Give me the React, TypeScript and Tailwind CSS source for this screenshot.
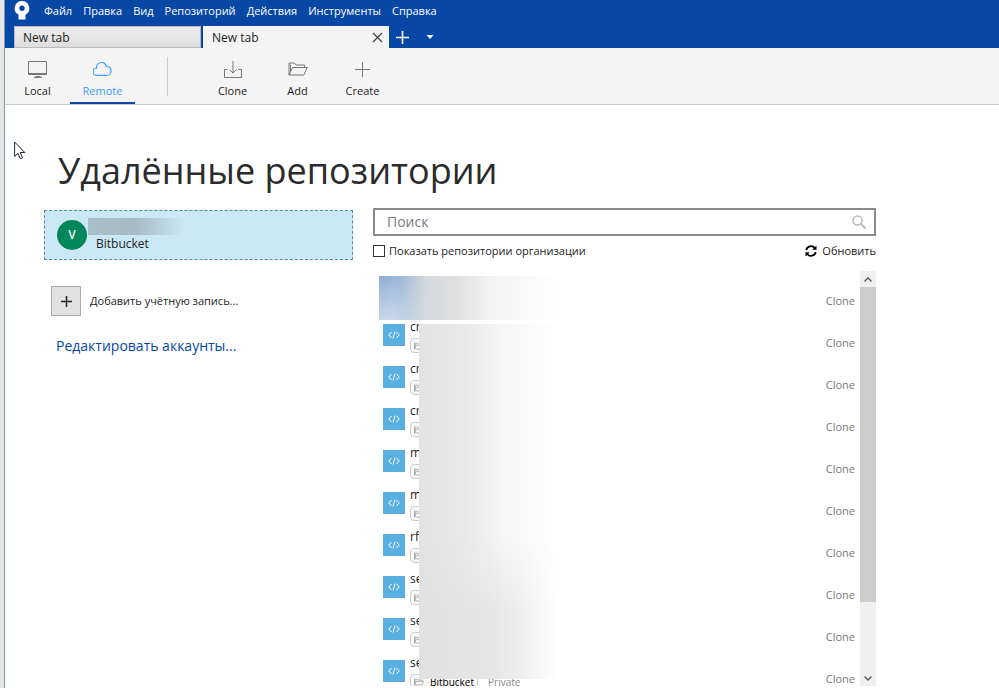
import { useState } from 'react'
import type { ReactNode } from 'react'

const menu = ['Файл', 'Правка', 'Вид', 'Репозиторий', 'Действия', 'Инструменты', 'Справка']

const repos = ['', 'cr', 'cr', 'cr', 'm', 'm', 'rf', 'se', 'se', 'se']

function Logo() {
  return (
    <svg width="16" height="20" viewBox="0 0 16 20" className="shrink-0" aria-hidden="true">
      <path
        d="M8 1a7.300 7.300 0 0 0-3.500 13.700v4.800h7v-4.800A7.300 7.300 0 0 0 8 1Zm0 4.600a2.700 2.700 0 1 1 0 5.400 2.700 2.700 0 0 1 0-5.400Z"
        fill="#fff"
        fillRule="evenodd"
      />
    </svg>
  )
}

function FolderIcon({ className }: { className?: string }) {
  return (
    <svg viewBox="0 0 20 14" fill="none" stroke="currentColor" className={className} aria-hidden="true">
      <path d="M1 13V1h5.500l1.500 2h8.500v2.500M1 13l3.500-7.500h14.800L15.800 13zM2.500 9.500v-7" />
    </svg>
  )
}

type ToolButtonProps = { label: string; active?: boolean; onClick?: () => void; children: ReactNode }

function ToolButton({ label, active, onClick, children }: ToolButtonProps) {
  return (
    <button
      type="button"
      onClick={onClick}
      className={`flex h-14 w-[65px] flex-col items-center border-b-2 pt-[10px] ${
        active ? 'border-[#0747a6] text-[#3b99fc]' : 'border-transparent text-[#777]'
      }`}
    >
      <span className="flex h-[22px] items-center justify-center">{children}</span>
      <span className={`mt-[2px] text-[11px] leading-[18px] ${active ? '' : 'text-[#222]'}`}>{label}</span>
    </button>
  )
}

function RepoRow({ name }: { name: string }) {
  return (
    <li className="flex h-[42px] items-start pl-[10px] pr-[5px]">
      <span className="mt-[2px] flex h-[22px] w-[22px] shrink-0 items-center justify-center bg-[#59afe1] text-white">
        <svg width="12" height="8" viewBox="0 0 12 8" fill="none" stroke="currentColor" aria-hidden="true">
          <path d="M3.500 1 .8 4l2.700 3M8.500 1l2.700 3-2.700 3M7 .5l-2 7" />
        </svg>
      </span>
      <div className="ml-[5px] min-w-0 flex-1">
        <div className="h-4 text-[12px] leading-[10px] text-[#222]">{name}</div>
        <div className="flex h-[15px] items-center">
          <span className="flex h-[15px] items-center gap-[6px] rounded-sm border border-[#ccc] bg-[#f8f8f8] px-[3px] text-[10px] leading-[12px] text-black">
            <FolderIcon className="h-2 w-[10px] text-[#777]" />
            Bitbucket
          </span>
          <span className="pl-[10px] text-[10px] leading-[12px] text-[#888]">Private</span>
        </div>
      </div>
      <button type="button" className="h-[42px] text-[11px] text-[#777]">
        Clone
      </button>
    </li>
  )
}

export default function App() {
  const [view, setView] = useState('Remote')
  const [query, setQuery] = useState('')
  const [showOrg, setShowOrg] = useState(false)

  return (
    <div className="flex h-screen overflow-hidden bg-[#e6e6e6] pl-1 font-['Open_Sans',sans-serif] text-[#222]">
      <div className="relative flex min-w-0 flex-1 flex-col border-l border-[#7d97ad] bg-white">
        <header className="bg-[#0747a6] text-white">
          <div className="flex h-[26px] items-start gap-[14px] pl-[9px]">
            <Logo />
            <nav className="flex gap-[11px] text-[11px] leading-[22px]">
              {menu.map((item) => (
                <button key={item} type="button">
                  {item}
                </button>
              ))}
            </nav>
          </div>
          <div className="flex h-[22px] items-stretch pl-[9px] text-[12px] text-[#222]">
            <button
              type="button"
              className="w-[187px] border border-[#bbb] bg-linear-to-b from-[#eee] to-[#ddd] pl-2 pt-px text-left"
            >
              New tab
            </button>
            <div className="ml-[2px] flex w-[186px] items-center justify-between bg-[#f4f4f4] pl-[9px] pr-[6px] pt-px">
              <button type="button">New tab</button>
              <button type="button" aria-label="Закрыть">
                <svg width="11" height="11" viewBox="0 0 11 11" stroke="#444" strokeWidth="1.300">
                  <path d="m1 1 9 9M10 1l-9 9" />
                </svg>
              </button>
            </div>
            <button type="button" aria-label="Новая вкладка" className="ml-[7px]">
              <svg width="13" height="13" viewBox="0 0 13 13" stroke="#fff" strokeWidth="1.600">
                <path d="M6.500 0v13M0 6.500h13" />
              </svg>
            </button>
            <button type="button" aria-label="Список вкладок" className="ml-[17px]">
              <svg width="8" height="4" viewBox="0 0 8 4" fill="#fff">
                <path d="M.5 0h7L4 4z" />
              </svg>
            </button>
          </div>
        </header>

        <div className="flex border-b border-[#ccc] bg-[#f4f4f4]">
          <ToolButton label="Local" active={view === 'Local'} onClick={() => setView('Local')}>
            <svg width="20" height="18" viewBox="0 0 20 18" fill="none" stroke="currentColor">
              <path d="M.5 1.500h18v13H.5zM.5 13.500h18M6 17.500h8M7.500 16.500h5" />
            </svg>
          </ToolButton>
          <ToolButton label="Remote" active={view === 'Remote'} onClick={() => setView('Remote')}>
            <svg width="20" height="16" viewBox="0 0 20 16" fill="none" stroke="currentColor" strokeWidth="1.200">
              <path d="M4 14.400a3.700 3.700 0 0 1-.5-7.400C3.500 3.500 5.600 1.500 8.500 1.500c2.500 0 4.300 1.500 4.900 4 2.800 0 4.600 1.900 4.600 4.400 0 2.600-1.900 4.500-4.400 4.500z" />
            </svg>
          </ToolButton>
          <div className="ml-8 mr-8 mt-[9px] h-[39px] w-px bg-[#ccc]" />
          <ToolButton label="Clone">
            <svg width="18" height="17" viewBox="0 0 18 17" fill="none" stroke="currentColor">
              <path d="M3.500 8.500h-3v8h17v-8h-3M9 0v12M5.500 8.500 9 12l3.500-3.500" />
            </svg>
          </ToolButton>
          <ToolButton label="Add">
            <FolderIcon className="h-[14px] w-5" />
          </ToolButton>
          <ToolButton label="Create">
            <svg width="15" height="15" viewBox="0 0 15 15" stroke="currentColor">
              <path d="M7.500 0v15M0 7.500h15" />
            </svg>
          </ToolButton>
        </div>

        <main className="flex min-h-0 flex-1 flex-col pl-[39px]">
          <h1 className="mt-[38px] pl-[14px] text-[36px] leading-[56px] text-[#2b2b2b]">Удалённые репозитории</h1>
          <div className="mt-[9px] flex min-h-0 flex-1">
            <aside className="mt-[2px] w-[309px] shrink-0">
              <button
                type="button"
                className="flex h-[50px] w-full items-center border border-dashed border-[#5b8aa0] bg-[#cbe8f6] pl-3 text-left"
              >
                <span className="flex h-[30px] w-[30px] items-center justify-center rounded-full bg-[#00875a] text-[12px] font-semibold text-white">
                  V
                </span>
                <span className="flex flex-col">
                  <span className="ml-px h-[17px] w-24 bg-linear-to-r from-[#a8bfca] via-[#a6bbc6] via-50% to-[#cbe8f6]" />
                  <span className="pl-[9px] text-[12px] leading-[18px]">Bitbucket</span>
                </span>
              </button>
              <button type="button" className="ml-[7px] mt-[26px] flex items-center gap-[9px] text-[11px]">
                <span className="flex h-[30px] w-[30px] items-center justify-center border border-[#aaa] bg-[#e1e1e1]">
                  <svg width="11" height="11" viewBox="0 0 11 11" stroke="#222" strokeWidth="1.500">
                    <path d="M5.500 0v11M0 5.500h11" />
                  </svg>
                </span>
                Добавить учётную запись...
              </button>
              <a href="#accounts" className="ml-3 mt-5 block text-[14px] leading-5 text-[#0747a6]">
                Редактировать аккаунты...
              </a>
            </aside>

            <section className="ml-5 flex w-[503px] min-w-0 flex-col">
              <label className="flex h-7 shrink-0 items-center border-2 border-[#8a8a8a] pl-3 pr-2">
                <input
                  value={query}
                  onChange={(e) => setQuery(e.target.value)}
                  placeholder="Поиск"
                  aria-label="Поиск"
                  className="min-w-0 flex-1 text-[14px] leading-5 outline-none placeholder:text-[#777]"
                />
                <svg width="14" height="14" viewBox="0 0 14 14" fill="none" stroke="#bbb">
                  <circle cx="5.500" cy="5.500" r="4.500" strokeWidth="1.500" />
                  <path d="m9 9 4 4" strokeWidth="2.200" strokeLinecap="round" />
                </svg>
              </label>
              <div className="mt-[6px] flex h-[18px] shrink-0 items-center justify-between text-[11px]">
                <label className="flex items-center gap-1">
                  <input
                    type="checkbox"
                    checked={showOrg}
                    onChange={(e) => setShowOrg(e.target.checked)}
                    className="h-3 w-3 appearance-none border border-[#333] bg-white checked:bg-[#0747a6]"
                  />
                  Показать репозитории организации
                </label>
                <button type="button" className="flex items-center gap-[5px]">
                  <svg width="12" height="12" viewBox="0 0 12 12" fill="none" stroke="#000" strokeWidth="1.800">
                    <path d="M1.200 5a4.900 4.900 0 0 1 8.600-2M10.800 7a4.900 4.900 0 0 1-8.600 2" />
                    <path d="M11.500.5v4.300H7.200zM.5 11.500V7.200h4.300z" fill="#000" stroke="none" />
                  </svg>
                  Обновить
                </button>
              </div>

              <div className="relative mt-[11px] flex min-h-0 flex-1 pb-[2px]">
                <ul className="min-w-0 flex-1 overflow-hidden pt-[9px]">
                  {repos.map((name, i) => (
                    <RepoRow key={i} name={name} />
                  ))}
                </ul>
                <div className="flex w-4 shrink-0 flex-col bg-[#f0f0f0] text-[#555]">
                  <button type="button" aria-label="Вверх" className="flex h-4 items-center justify-center">
                    <svg width="8" height="5" viewBox="0 0 8 5" fill="none" stroke="currentColor" strokeWidth="1.300">
                      <path d="m.5 4.500 3.500-3.500 3.500 3.500" />
                    </svg>
                  </button>
                  <div className="h-[76%] bg-[#cdcdcd]" />
                  <button type="button" aria-label="Вниз" className="mt-auto flex h-4 items-center justify-center">
                    <svg width="8" height="5" viewBox="0 0 8 5" fill="none" stroke="currentColor" strokeWidth="1.300">
                      <path d="m.5.5 3.500 3.500 3.500-3.500" />
                    </svg>
                  </button>
                </div>

                {/* smudged-out repository names */}
                <div className="absolute left-[6px] top-[5px] h-11 w-[180px] bg-[linear-gradient(to_right,#91b0d5_0%,#9cb8d8_12%,#d3d9de_26%,#dedede_42%,#f2f2f2_60%,#fff_100%)]">
                  <div className="h-full w-[50px] bg-linear-to-b from-transparent to-white/50 mask-r-from-30%" />
                </div>
                <div className="absolute left-0 top-[49px] h-1 w-[186px] bg-white" />
                <div className="absolute bottom-[9px] left-[46px] top-[53px] w-[138px] bg-[linear-gradient(to_right,#e3e3e3_0%,#e8e8e8_30%,#f5f5f5_60%,#fff_100%)]" />
                <div className="absolute bottom-[9px] left-[46px] h-[140px] w-[138px] bg-[linear-gradient(to_right,#e1e1e1_0%,#e5e5e5_50%,#efefef_75%,#fff_100%)] mask-t-from-50%" />
              </div>
            </section>
          </div>
        </main>

        <svg width="12" height="19" viewBox="0 0 12 19" className="absolute left-[9px] top-[141px]" aria-hidden="true">
          <path
            d="M.6 1v14.500l3.300-3.200 2.400 5.500 2.300-1-2.400-5.300h4.600z"
            fill="#fff"
            stroke="#223"
            strokeWidth="1"
          />
        </svg>
      </div>
    </div>
  )
}
